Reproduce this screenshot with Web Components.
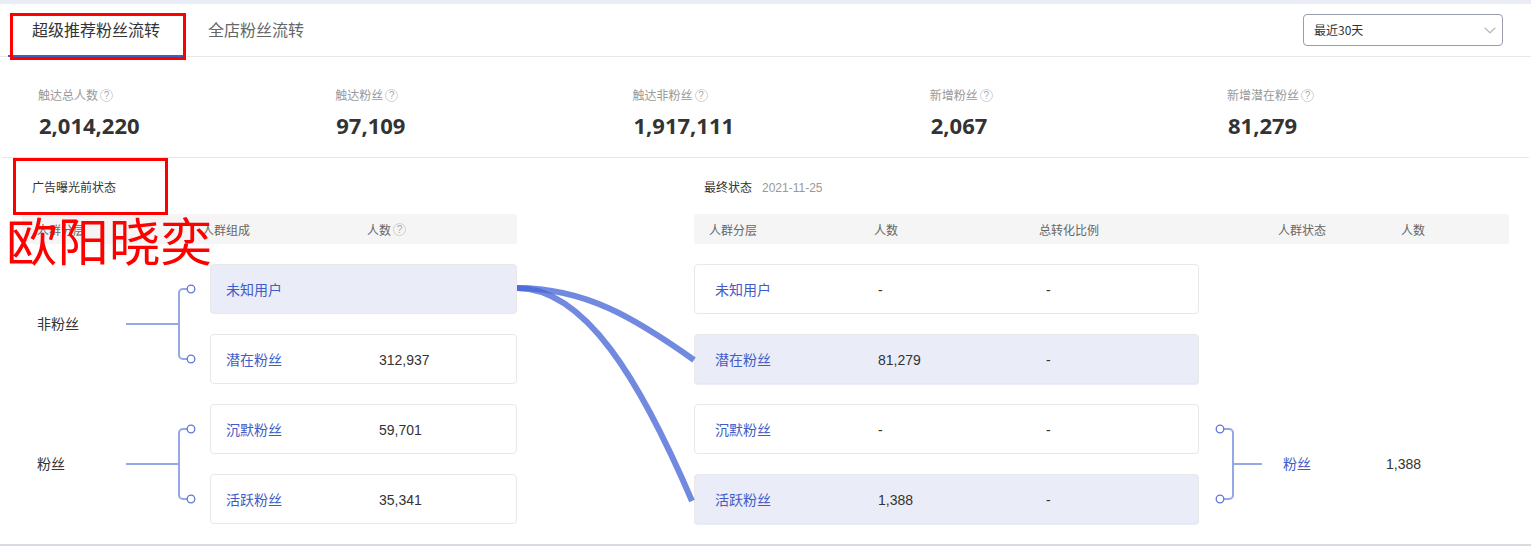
<!DOCTYPE html>
<html lang="zh">
<head>
<meta charset="utf-8">
<title>粉丝流转</title>
<style>
  html, body { margin: 0; padding: 0; background: #fff; }
  body { font-family: "Liberation Sans", "Noto Sans CJK SC", sans-serif; color: #333; }
</style>
</head>
<body>
<fan-page>
  <fan-tabs>
    <span slot="active">超级推荐粉丝流转</span>
    <span slot="other">全店粉丝流转</span>
  </fan-tabs>
  <stat-strip>
    <stat-item label="触达总人数" value="2,014,220"></stat-item>
    <stat-item label="触达粉丝" value="97,109"></stat-item>
    <stat-item label="触达非粉丝" value="1,917,111"></stat-item>
    <stat-item label="新增粉丝" value="2,067"></stat-item>
    <stat-item label="新增潜在粉丝" value="81,279"></stat-item>
  </stat-strip>
  <flow-section>
    <before-panel slot="before"></before-panel>
    <after-panel slot="after"></after-panel>
  </flow-section>
</fan-page>

<script>
class FanPage extends HTMLElement {
    constructor() {
        super();
        this.attachShadow({ mode: 'open' });
        this.shadowRoot.innerHTML = `
            <style>
                :host {
                    display: block;
                    position: relative;
                    width: 1531px;
                    height: 546px;
                    box-sizing: border-box;
                    overflow: hidden;
                    background: #fff;
                    border-top: 4px solid #e9ebf5;
                    border-bottom: 2px solid #d9dae2;
                }
                .mark {
                    position: absolute;
                    box-sizing: border-box;
                    border: 3px solid #f00;
                }
                .tab-mark { left: 10px; top: 9px; width: 176px; height: 47px; }
                .title-mark { left: 13px; top: 154px; width: 155px; height: 57px; }
                .name-mark {
                    position: absolute;
                    left: 6px;
                    top: 205px;
                    font: 51.5px/60px "Noto Sans CJK SC", sans-serif;
                    color: #f00;
                    white-space: nowrap;
                }
                svg { position: absolute; left: 0; top: -4px; pointer-events: none; }
            </style>
            <slot></slot>
            <svg width="1531" height="546" viewBox="0 0 1531 546" fill="none" stroke="#4565d6" stroke-opacity=".76">
                <path stroke-width="6" d="M517 288C585 288 635 318 694 360"/>
                <path stroke-width="6" d="M517 288C585 288 640 380 692 501"/>
            </svg>
            <div class="mark tab-mark"></div>
            <div class="mark title-mark"></div>
            <div class="name-mark">欧阳晓奕</div>
        `;
    }
}

class FanTabs extends HTMLElement {
    constructor() {
        super();
        this.attachShadow({ mode: 'open' });
        this.shadowRoot.innerHTML = `
            <style>
                :host {
                    display: flex;
                    align-items: flex-start;
                    height: 53px;
                    box-sizing: border-box;
                    padding-left: 8px;
                    padding-right: 28px;
                    border-bottom: 1px solid #e8e8e8;
                    font: 16px/50px "Noto Sans CJK SC", sans-serif;
                }
                .tab { padding: 0 24px; color: #666; height: 53px; box-sizing: border-box; }
                .tab.on { color: #333; border-bottom: 2px solid #3f5cc8; width: 176px; }
                .select {
                    margin-left: auto;
                    margin-top: 10px;
                    width: 200px;
                    height: 32px;
                    box-sizing: border-box;
                    border: 1px solid #9a9cab;
                    border-radius: 4px;
                    padding: 0 6px 0 10px;
                    display: flex;
                    align-items: center;
                    justify-content: space-between;
                    font: 12px/30px "Noto Sans CJK SC", sans-serif;
                    color: #333;
                }
            </style>
            <div class="tab on"><slot name="active"></slot></div>
            <div class="tab"><slot name="other"></slot></div>
            <div class="select">
                <span>最近30天</span>
                <svg width="12" height="7" viewBox="0 0 12 7" fill="none" stroke="#bbb" stroke-width="1.2"><path d="M.7.7 6 5.8 11.3.7"/></svg>
            </div>
        `;
    }
}

class StatStrip extends HTMLElement {
    constructor() {
        super();
        this.attachShadow({ mode: 'open' });
        this.shadowRoot.innerHTML = `
            <style>
                :host {
                    display: grid;
                    grid-template-columns: repeat(5, 297.25px);
                    height: 101px;
                    box-sizing: border-box;
                    margin: 0 2px;
                    padding: 29px 0 0 36px;
                    border-bottom: 1px solid #e8e8e8;
                }
            </style>
            <slot></slot>
        `;
    }
}

class HelpMark extends HTMLElement {
    constructor() {
        super();
        this.attachShadow({ mode: 'open' });
        this.shadowRoot.innerHTML = `
            <style>
                :host {
                    display: inline-block;
                    flex: none;
                    width: 13px;
                    height: 13px;
                    margin-left: 2px;
                    box-sizing: border-box;
                    border: 1px solid #d0d0d0;
                    border-radius: 50%;
                    font: 10px/11px "Liberation Sans", sans-serif;
                    color: #aaa;
                    text-align: center;
                }
            </style>
            ?
        `;
    }
}

class StatItem extends HTMLElement {
    constructor() {
        super();
        this.attachShadow({ mode: 'open' });
    }

    connectedCallback() {
        const label = this.getAttribute('label') || '';
        const value = this.getAttribute('value') || '';
        this.shadowRoot.innerHTML = `
            <style>
                :host { display: block; }
                .label {
                    display: flex;
                    align-items: center;
                    height: 18px;
                    font: 12px/18px "Noto Sans CJK SC", sans-serif;
                    color: #999;
                }
                .value {
                    margin-top: 6px;
                    padding-left: 1px;
                    font: 700 22px/30px "Open Sans", sans-serif;
                    color: #333;
                }
            </style>
            <div class="label">${label}<help-mark></help-mark></div>
            <div class="value">${value}</div>
        `;
    }
}

class FlowSection extends HTMLElement {
    constructor() {
        super();
        this.attachShadow({ mode: 'open' });
        this.shadowRoot.innerHTML = `
            <style>
                :host {
                    display: flex;
                    gap: 177px;
                    padding-left: 22px;
                }
            </style>
            <slot name="before"></slot>
            <slot name="after"></slot>
        `;
    }
}

class FlowCard extends HTMLElement {
    constructor() {
        super();
        this.attachShadow({ mode: 'open' });
    }

    connectedCallback() {
        const name = this.getAttribute('name') || '';
        const count = this.getAttribute('count') || '';
        const ratio = this.getAttribute('ratio');
        this.shadowRoot.innerHTML = `
            <style>
                :host {
                    display: flex;
                    align-items: center;
                    height: 50px;
                    box-sizing: border-box;
                    background: #fff;
                    border: 1px solid #e8e8e8;
                    border-radius: 4px;
                    padding-left: var(--card-pad, 15px);
                    font-size: 14px;
                    color: #333;
                }
                :host([active]) { background: #eaecf7; }
                span { flex: none; }
                .name {
                    width: var(--name-width, 153px);
                    color: #3f5cc8;
                    font-family: "Noto Sans CJK SC", sans-serif;
                }
                .count { width: 168px; padding-top: 1px; font-family: "Liberation Sans", sans-serif; }
                .ratio { padding-top: 1px; font-family: "Liberation Sans", sans-serif; }
            </style>
            <span class="name">${name}</span>
            <span class="count">${count}</span>
            ${ratio ? `<span class="ratio">${ratio}</span>` : ''}
        `;
    }
}

class BracketLine extends HTMLElement {
    constructor() {
        super();
        this.attachShadow({ mode: 'open' });
    }

    connectedCallback() {
        const flip = this.hasAttribute('flip');
        const shape = flip
            ? { line: 'M21 25h9a4 4 0 0 1 4 4v62a4 4 0 0 1-4 4h-9M34 60h29', x: 21 }
            : { line: 'M0 60h53M65 25h-8a4 4 0 0 0-4 4v62a4 4 0 0 0 4 4h8', x: 65 };
        this.shadowRoot.innerHTML = `
            <style>
                :host { display: block; width: 84px; height: 120px; flex: none; }
                svg { display: block; }
            </style>
            <svg width="84" height="120" viewBox="0 0 84 120" fill="none">
                <path d="${shape.line}" stroke="#94a8e6" stroke-width="2"/>
                <circle cx="${shape.x}" cy="25" r="3.8" fill="#fff" stroke="#5f78d8" stroke-width="1.3"/>
                <circle cx="${shape.x}" cy="95" r="3.8" fill="#fff" stroke="#5f78d8" stroke-width="1.3"/>
            </svg>
        `;
    }
}

class TableHead extends HTMLElement {
    constructor() {
        super();
        this.attachShadow({ mode: 'open' });
        this.shadowRoot.innerHTML = `
            <style>
                :host {
                    display: flex;
                    align-items: center;
                    height: 30px;
                    box-sizing: border-box;
                    padding-top: 1px;
                    border-radius: 2px;
                    background: #f5f5f5;
                    font: 12px/18px "Noto Sans CJK SC", sans-serif;
                    color: #666;
                }
                ::slotted(span) { display: flex; align-items: center; box-sizing: border-box; }
            </style>
            <slot></slot>
        `;
    }
}

const panelTitle = `
    .title {
        height: 56px;
        padding: 20px 0 0 10px;
        box-sizing: border-box;
        font: 12px/18px "Noto Sans CJK SC", sans-serif;
        color: #333;
    }
    .title small { font-size: 12px; color: #999; margin-left: 10px; font-family: "Liberation Sans", sans-serif; }
`;

class BeforePanel extends HTMLElement {
    constructor() {
        super();
        this.attachShadow({ mode: 'open' });
        this.shadowRoot.innerHTML = `
            <style>
                :host { display: block; width: 495px; }
                ${panelTitle}
                .groups { display: flex; flex-direction: column; gap: 20px; margin-top: 20px; }
                .group { display: flex; align-items: center; height: 120px; }
                .who { width: 104px; padding: 0 0 2px 15px; box-sizing: border-box; font: 14px "Noto Sans CJK SC", sans-serif; color: #333; }
                .cards { width: 307px; display: flex; flex-direction: column; gap: 20px; }
            </style>
            <div class="title">广告曝光前状态</div>
            <table-head>
                <span style="width:180px;padding-left:15px">人群分层</span>
                <span style="width:165px">人群组成</span>
                <span>人数<help-mark></help-mark></span>
            </table-head>
            <div class="groups">
                <div class="group">
                    <div class="who">非粉丝</div>
                    <bracket-line></bracket-line>
                    <div class="cards">
                        <flow-card name="未知用户" active></flow-card>
                        <flow-card name="潜在粉丝" count="312,937"></flow-card>
                    </div>
                </div>
                <div class="group">
                    <div class="who">粉丝</div>
                    <bracket-line></bracket-line>
                    <div class="cards">
                        <flow-card name="沉默粉丝" count="59,701"></flow-card>
                        <flow-card name="活跃粉丝" count="35,341"></flow-card>
                    </div>
                </div>
            </div>
        `;
    }
}

class AfterPanel extends HTMLElement {
    constructor() {
        super();
        this.attachShadow({ mode: 'open' });
        this.shadowRoot.innerHTML = `
            <style>
                :host { display: block; width: 815px; --card-pad: 20px; --name-width: 163px; }
                ${panelTitle}
                .grid {
                    display: grid;
                    grid-template-columns: 505px auto;
                    grid-auto-rows: 50px;
                    row-gap: 20px;
                    margin-top: 20px;
                }
                flow-card { grid-column: 1; }
                flow-card[active] { box-shadow: 0 1px 0 #eaecf7; }
                .fans {
                    grid-column: 2;
                    grid-row: 3 / span 2;
                    display: flex;
                    align-items: center;
                    font-size: 14px;
                }
                .fans a { width: 103px; padding-bottom: 2px; color: #3f5cc8; font-family: "Noto Sans CJK SC", sans-serif; }
            </style>
            <div class="title">最终状态<small>2021-11-25</small></div>
            <table-head>
                <span style="width:180px;padding-left:15px">人群分层</span>
                <span style="width:165px">人数</span>
                <span style="width:239px">总转化比例</span>
                <span style="width:123px">人群状态</span>
                <span>人数</span>
            </table-head>
            <div class="grid">
                <flow-card name="未知用户" count="-" ratio="-"></flow-card>
                <flow-card name="潜在粉丝" count="81,279" ratio="-" active></flow-card>
                <flow-card name="沉默粉丝" count="-" ratio="-"></flow-card>
                <flow-card name="活跃粉丝" count="1,388" ratio="-" active></flow-card>
                <div class="fans">
                    <bracket-line flip></bracket-line>
                    <a>粉丝</a>
                    <span>1,388</span>
                </div>
            </div>
        `;
    }
}

customElements.define('fan-page', FanPage);
customElements.define('fan-tabs', FanTabs);
customElements.define('stat-strip', StatStrip);
customElements.define('help-mark', HelpMark);
customElements.define('stat-item', StatItem);
customElements.define('flow-section', FlowSection);
customElements.define('flow-card', FlowCard);
customElements.define('bracket-line', BracketLine);
customElements.define('table-head', TableHead);
customElements.define('before-panel', BeforePanel);
customElements.define('after-panel', AfterPanel);
</script>
</body>
</html>
